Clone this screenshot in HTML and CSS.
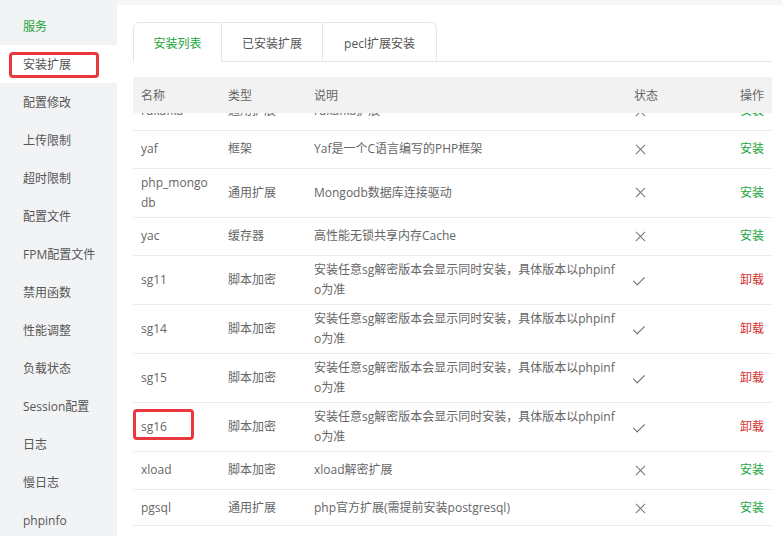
FILE: index.html
```html
<!DOCTYPE html>
<html lang="zh">
<head>
    <meta charset="UTF-8">
    <title>PHP管理</title>
    <link rel="stylesheet" href="styles.css">
</head>
<body>
    <div class="layout">
        <ul class="side">
            <li class="side-title">服务</li>
            <li class="active">安装扩展<span class="hl hl-side"></span></li>
            <li>配置修改</li>
            <li>上传限制</li>
            <li>超时限制</li>
            <li>配置文件</li>
            <li>FPM配置文件</li>
            <li>禁用函数</li>
            <li>性能调整</li>
            <li>负载状态</li>
            <li>Session配置</li>
            <li>日志</li>
            <li>慢日志</li>
            <li>phpinfo</li>
        </ul>

        <div class="main">
            <div class="tabs">
                <span class="tab on">安装列表</span>
                <span class="tab">已安装扩展</span>
                <span class="tab">pecl扩展安装</span>
            </div>

            <table class="grid head">
                <colgroup>
                    <col class="c-name"><col class="c-type"><col class="c-desc"><col class="c-state"><col>
                </colgroup>
                <tr>
                    <th>名称</th><th>类型</th><th>说明</th><th>状态</th><th class="op">操作</th>
                </tr>
            </table>

            <div class="body-wrap">
                <table class="grid">
                    <colgroup>
                        <col class="c-name"><col class="c-type"><col class="c-desc"><col class="c-state"><col>
                    </colgroup>
                    <tr><td>rdkafka</td><td>通用扩展</td><td>rdkafka扩展</td><td><i class="no"></i></td><td class="op"><a class="add">安装</a></td></tr>
                    <tr><td>yaf</td><td>框架</td><td>Yaf是一个C语言编写的PHP框架</td><td><i class="no"></i></td><td class="op"><a class="add">安装</a></td></tr>
                    <tr><td>php_mongodb</td><td>通用扩展</td><td>Mongodb数据库连接驱动</td><td><i class="no"></i></td><td class="op"><a class="add">安装</a></td></tr>
                    <tr><td>yac</td><td>缓存器</td><td>高性能无锁共享内存Cache</td><td><i class="no"></i></td><td class="op"><a class="add">安装</a></td></tr>
                    <tr><td>sg11</td><td>脚本加密</td><td>安装任意sg解密版本会显示同时安装，具体版本以phpinfo为准</td><td><i class="yes"></i></td><td class="op"><a class="del">卸载</a></td></tr>
                    <tr><td>sg14</td><td>脚本加密</td><td>安装任意sg解密版本会显示同时安装，具体版本以phpinfo为准</td><td><i class="yes"></i></td><td class="op"><a class="del">卸载</a></td></tr>
                    <tr><td>sg15</td><td>脚本加密</td><td>安装任意sg解密版本会显示同时安装，具体版本以phpinfo为准</td><td><i class="yes"></i></td><td class="op"><a class="del">卸载</a></td></tr>
                    <tr><td class="mark">sg16<span class="hl hl-row"></span></td><td>脚本加密</td><td>安装任意sg解密版本会显示同时安装，具体版本以phpinfo为准</td><td><i class="yes"></i></td><td class="op"><a class="del">卸载</a></td></tr>
                    <tr><td>xload</td><td>脚本加密</td><td>xload解密扩展</td><td><i class="no"></i></td><td class="op"><a class="add">安装</a></td></tr>
                    <tr><td>pgsql</td><td>通用扩展</td><td>php官方扩展(需提前安装postgresql)</td><td><i class="no"></i></td><td class="op"><a class="add">安装</a></td></tr>
                    <tr><td>pdo_pgsql</td><td>通用扩展</td><td>php官方扩展(需提前安装postgresql)</td><td><i class="no"></i></td><td class="op"><a class="add">安装</a></td></tr>
                </table>
            </div>
        </div>
    </div>

    <script>
        // 列表已向下滚动一段
        document.querySelector('.body-wrap').scrollTop = 21;
    </script>
</body>
</html>
```

FILE: styles.css
```css
* {
    margin: 0;
    padding: 0;
    box-sizing: border-box;
}

body {
    font-family: "Open Sans", "Noto Sans CJK SC", sans-serif;
    font-size: 12px;
    color: #666;
    background: #fff;
}

.layout {
    display: flex;
    height: 536px;
    overflow: hidden;
}

/* 左侧菜单 */
.side {
    list-style: none;
    width: 117px;
    flex-shrink: 0;
    background: #f2f3f5;
    padding-top: 7px;
}

.side li {
    position: relative;
    height: 38px;
    line-height: 40px;
    padding-left: 23px;
    color: #555;
}

.side .side-title {
    color: #20a53a;
}

.side .active {
    background: #fff;
}

.hl {
    position: absolute;
    border: 3px solid #e8383d;
    border-radius: 4px;
}

.hl-side {
    left: 9px;
    top: 7px;
    width: 90px;
    height: 26px;
}

.hl-row {
    left: 0;
    top: 6px;
    width: 61px;
    height: 31px;
}

/* 右侧内容 */
.main {
    flex: 1;
    border-top: 5px solid #f6f6f6;
    padding: 17px 10px 0 16px;
}

.tabs {
    display: flex;
    border-bottom: 1px solid #e6e6e6;
}

.tab {
    height: 39px;
    line-height: 41px;
    text-align: center;
    color: #555;
    border: 1px solid #e6e6e6;
    border-left: none;
    border-bottom: none;
    background: #fff;
}

.tab:nth-child(1) {
    width: 89px;
    border-left: 1px solid #e6e6e6;
    border-top-left-radius: 6px;
}

.tab:nth-child(2) {
    width: 101px;
}

.tab:nth-child(3) {
    width: 114px;
    border-top-right-radius: 6px;
}

.tab.on {
    color: #20a53a;
    height: 40px;
    margin-bottom: -1px;
}

/* 表格 */
.grid {
    width: 100%;
    table-layout: fixed;
    border-collapse: collapse;
}

.head {
    margin-top: 15px;
}

.c-name { width: 87px; }
.c-type { width: 86px; }
.c-desc { width: 320px; }
.c-state { width: 80px; }

.grid th {
    height: 36px;
    background: #f2f2f2;
    font-weight: normal;
    text-align: left;
    padding: 0 8px;
    color: #666;
}

.grid td {
    height: 38px;
    padding: 4px 8px;
    line-height: 20px;
    border-bottom: 1px solid #ececec;
    word-break: break-all;
    vertical-align: middle;
}

.grid .op {
    text-align: right;
}

.grid .mark {
    position: relative;
}

.body-wrap {
    height: 413px;
    overflow: hidden;
    border-bottom: 1px solid #ececec;
}

.add {
    color: #20a53a;
}

.del {
    color: #d43030;
}

/* 状态图标 */
.no, .yes {
    display: inline-block;
    position: relative;
    width: 12px;
    height: 12px;
    vertical-align: middle;
}

.no::before, .no::after {
    content: "";
    position: absolute;
    left: 0;
    top: 5px;
    width: 13px;
    height: 1.2px;
    background: #777;
    transform: rotate(45deg);
}

.no::after {
    transform: rotate(-45deg);
}

.yes {
    margin-top: 1px;
}

.yes::before {
    content: "";
    position: absolute;
    left: 2px;
    top: -1px;
    width: 5px;
    height: 10px;
    border-right: 1.3px solid #666;
    border-bottom: 1.3px solid #666;
    transform: rotate(45deg);
}
```
